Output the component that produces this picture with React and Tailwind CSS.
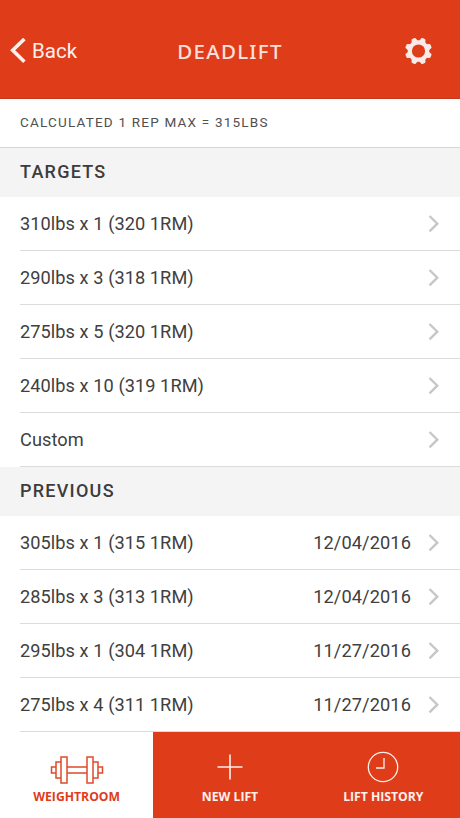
import React from "react";

const targets = [
  "310lbs x 1 (320 1RM)",
  "290lbs x 3 (318 1RM)",
  "275lbs x 5 (320 1RM)",
  "240lbs x 10 (319 1RM)",
  "Custom",
];

const previous = [
  ["305lbs x 1 (315 1RM)", "12/04/2016"],
  ["285lbs x 3 (313 1RM)", "12/04/2016"],
  ["295lbs x 1 (304 1RM)", "11/27/2016"],
  ["275lbs x 4 (311 1RM)", "11/27/2016"],
];

function Gear() {
  const teeth = [0, 45, 90, 135, 180, 225, 270, 315];
  return (
    <svg width="28" height="28" viewBox="-14.5 -14 28 28">
      <circle r="8.7" fill="none" stroke="#f8eae8" strokeWidth="4.2" />
      {teeth.map((a) => (
        <path
          key={a}
          d="M-3.4 -9.5 L-2.2 -12.800 Q-2 -13.500 -1.2 -13.500 H1.2 Q2 -13.500 2.2 -12.800 L3.4 -9.5 Z"
          fill="#f8eae8"
          transform={`rotate(${a + 22.5})`}
        />
      ))}
    </svg>
  );
}

function Section({ title }) {
  return (
    <h2 className="flex h-[49px] items-center bg-[#f4f4f4] pb-[2px] pl-5 text-[18px] font-medium tracking-[1.25px] text-[#3c3c3c]">
      {title}
    </h2>
  );
}

function Row({ label, date }) {
  return (
    <li className="ml-5 flex h-[54px] items-center border-b border-[#dcdcdc] pr-5 text-[18.2px] tracking-[0.06px] text-[#404040]">
      <span className="flex-1">{label}</span>
      {date && <span className="mr-[17px] tracking-[0.1px]">{date}</span>}
      <svg width="12" height="18" viewBox="0 0 12 18" fill="none" stroke="#c7c7c7" strokeWidth="2.4">
        <path d="M1.5 1 L9.3 8.7 L1.5 16.4" />
      </svg>
    </li>
  );
}

function Tab({ label, active, children }) {
  return (
    <div
      className={
        "flex flex-1 flex-col items-center pt-[17px] font-['Open_Sans',sans-serif] text-[12.2px] font-bold " +
        (active ? "bg-white text-[#de3c1b]" : "text-[#fff1ec]")
      }
    >
      <div className="flex h-9 items-center">{children}</div>
      <span className="mt-1 leading-4">{label}</span>
    </div>
  );
}

export default function App() {
  return (
    <div className="flex h-[818px] w-[460px] flex-col overflow-hidden bg-white font-[Roboto,sans-serif]">
      <header className="grid h-[99px] shrink-0 grid-cols-[1fr_auto_1fr] items-center border-b border-[#c33a1e] bg-[#df3c1a] pt-[3px] text-[#fff0eb]">
        <div className="flex items-center pl-[10px] text-[20.5px]">
          <svg width="16" height="26" viewBox="0 0 16 26" fill="none" stroke="currentColor" strokeWidth="3.6">
            <path d="M14.4 1 L2.7 12.3 L14.4 23.7" />
          </svg>
          <span className="ml-[6px] pt-[2px]">Back</span>
        </div>
        <h1 className="pt-px font-['Noto_Sans',sans-serif] text-[20.5px] font-medium tracking-[1.25px] text-[#fbe0db]">DEADLIFT</h1>
        <div className="flex justify-end pr-[28px]"><Gear /></div>
      </header>
      <p className="flex h-[49px] shrink-0 items-center border-b border-[#d6d6d6] pb-px pl-5 text-[13.5px] tracking-[1.2px] text-[#505050]">
        CALCULATED 1 REP MAX = 315LBS
      </p>
      <Section title="TARGETS" />
      <ul>
        {targets.map((t) => <Row key={t} label={t} />)}
      </ul>
      <Section title="PREVIOUS" />
      <ul>
        {previous.map(([t, d]) => <Row key={t} label={t} date={d} />)}
      </ul>
      <nav className="flex h-[86px] shrink-0 bg-[#df3c1a]">
        <Tab label="WEIGHTROOM" active>
          <svg className="mt-[5px]" width="54" height="28" viewBox="0 0 54 28" fill="none" stroke="#df4a2b" strokeWidth="1.5">
            <rect x="11" y="1" width="6" height="26" />
            <rect x="37" y="1" width="6" height="26" />
            <path d="M11 6H6V22H11M43 6H48V22H43M6 11H1.500V17H6M48 11H52.500V17H48M17 11H37M17 17H37" />
          </svg>
        </Tab>
        <Tab label="NEW LIFT">
          <svg width="26" height="26" viewBox="0 0 26 26" stroke="#fff0eb" strokeWidth="1.6">
            <path d="M13 .5V25.500M.5 13H25.500" />
          </svg>
        </Tab>
        <Tab label="LIFT HISTORY">
          <svg width="32" height="32" viewBox="0 0 32 32" fill="none" stroke="#fff0eb" strokeWidth="1.3">
            <circle cx="16" cy="16" r="14.700" />
            <path d="M17 7V17H9" />
          </svg>
        </Tab>
      </nav>
    </div>
  );
}
